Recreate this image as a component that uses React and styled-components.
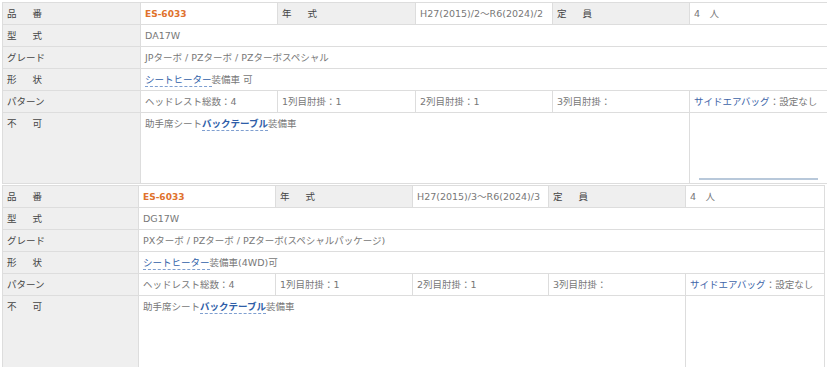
import React from 'react';
import styled, { createGlobalStyle } from 'styled-components';

const GlobalStyle = createGlobalStyle`
  html, body {
    margin: 0;
    padding: 0;
    background: #ffffff;
  }
  body {
    font-family: "DejaVu Sans", "Noto Sans CJK JP", sans-serif;
    font-size: 9.5px;
    color: #666666;
  }
`;

const Page = styled.div`
  padding: 2px 0 0 2px;
  display: flex;
  flex-direction: column;
  gap: 1px;
`;

const Spec = styled.table`
  width: ${props => props.width}px;
  border-collapse: collapse;
  table-layout: fixed;
  border: 1px solid #dddddd;
`;

const Row = styled.tr`
  height: ${props => props.tall || 22}px;
`;

const Label = styled.th`
  background: #efefef;
  color: #444444;
  font-weight: normal;
  text-align: left;
  vertical-align: ${props => (props.top ? 'top' : 'middle')};
  padding: ${props => (props.top ? '4px 4px 0' : '0 4px')};
  border: 1px solid #dddddd;
  white-space: nowrap;
  line-height: 14px;
`;

const Spread = styled.span`
  letter-spacing: 16px;
`;

const Cell = styled.td`
  background: #ffffff;
  color: #777777;
  text-align: left;
  vertical-align: ${props => (props.top ? 'top' : 'middle')};
  padding: ${props => (props.top ? '4px 4px 0' : '0 4px')};
  border: 1px solid #dddddd;
  white-space: nowrap;
  line-height: 14px;
  position: relative;
`;

const PartNo = styled.span`
  color: #e0722c;
  font-weight: bold;
  font-size: 9px;
`;

const Term = styled.span`
  color: #2f5ea8;
  font-weight: ${props => (props.bold ? 'bold' : 'normal')};
  border-bottom: 1px dashed #7f9fd0;
  padding-bottom: 1px;
`;

const Note = styled.span`
  color: #3d64a8;
`;

const EmptyBar = styled.div`
  position: absolute;
  left: 9px;
  right: 9px;
  bottom: 3px;
  height: 2px;
  background: #b8c8da;
`;

const specs = [
  {
    width: 825,
    cols: [138, 137, 138, 137, 137, 138],
    year: 'H27(2015)/2～R6(2024)/2',
    model: 'DA17W',
    grade: 'JPターボ / PZターボ / PZターボスペシャル',
    shape: '装備車 可',
    tall: 71,
    bar: true,
  },
  {
    width: 822,
    cols: [136, 137, 137, 136, 137, 139],
    year: 'H27(2015)/3～R6(2024)/3',
    model: 'DG17W',
    grade: 'PXターボ / PZターボ / PZターボ(スペシャルパッケージ)',
    shape: '装備車(4WD)可',
    tall: 73,
    bar: false,
  },
];

const SpecTable = ({ spec }) => (
  <Spec width={spec.width}>
    <colgroup>
      {spec.cols.map((w, i) => (
        <col key={i} style={{ width: w }} />
      ))}
    </colgroup>
    <tbody>
      <Row>
        <Label><Spread>品番</Spread></Label>
        <Cell><PartNo>ES-6033</PartNo></Cell>
        <Label><Spread>年式</Spread></Label>
        <Cell>{spec.year}</Cell>
        <Label><Spread>定員</Spread></Label>
        <Cell>4　人</Cell>
      </Row>
      <Row>
        <Label><Spread>型式</Spread></Label>
        <Cell colSpan={5}>{spec.model}</Cell>
      </Row>
      <Row>
        <Label>グレード</Label>
        <Cell colSpan={5}>{spec.grade}</Cell>
      </Row>
      <Row>
        <Label><Spread>形状</Spread></Label>
        <Cell colSpan={5}>
          <Term>シートヒーター</Term>{spec.shape}
        </Cell>
      </Row>
      <Row>
        <Label>パターン</Label>
        <Cell>ヘッドレスト総数：4</Cell>
        <Cell>1列目肘掛：1</Cell>
        <Cell>2列目肘掛：1</Cell>
        <Cell>3列目肘掛：</Cell>
        <Cell><Note>サイドエアバッグ</Note>：設定なし</Cell>
      </Row>
      <Row tall={spec.tall}>
        <Label top><Spread>不可</Spread></Label>
        <Cell top colSpan={4}>
          助手席シート<Term bold>バックテーブル</Term>装備車
        </Cell>
        <Cell top>{spec.bar && <EmptyBar />}</Cell>
      </Row>
    </tbody>
  </Spec>
);

export default function App() {
  return (
    <>
      <GlobalStyle />
      <Page>
        {specs.map((s, i) => (
          <SpecTable key={i} spec={s} />
        ))}
      </Page>
    </>
  );
}
